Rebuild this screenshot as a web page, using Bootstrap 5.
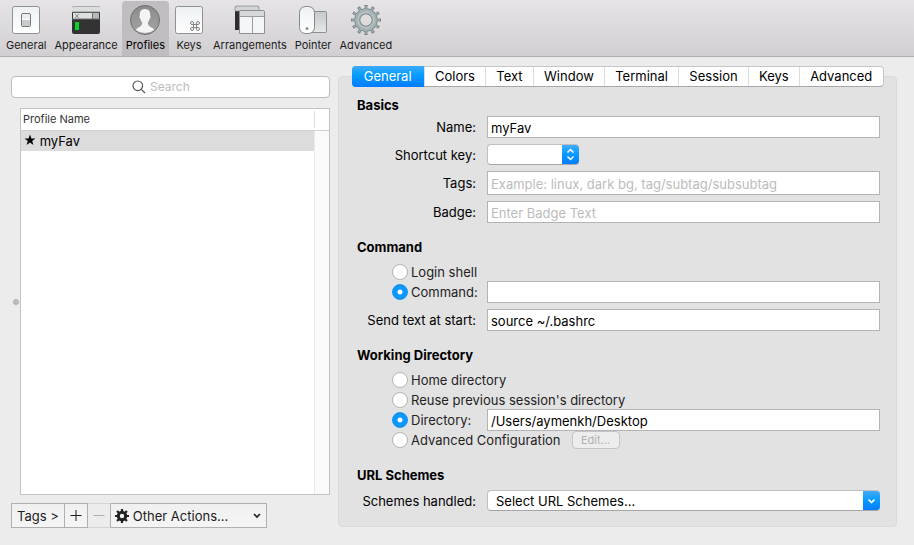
<!DOCTYPE html>
<html lang="en">
<head>
<meta charset="utf-8">
<meta name="viewport" content="width=device-width, initial-scale=1">
<title>Preferences – Profiles</title>
<link href="https://cdn.jsdelivr.net/npm/bootstrap@5.3.0/dist/css/bootstrap.min.css" rel="stylesheet">
<style>
  body { background: #ececec; color: #000; font: 13px/18px Inter, "Liberation Sans", sans-serif; }
  .toolbar { background: linear-gradient(#e6e4e6, #d1cfd1); border-bottom: 1px solid #b1afb1; padding: 1px 2px 0; }
  .tool { border: 0; border-radius: 4px 4px 0 0; background: none; padding: 3px 4px 2px; font-size: 11px; line-height: 18px; min-width: 39px; color: #1c1c1c; }
  .tool svg { width: 32px; height: 32px; }
  .tool.active { background: #bfbdbf; color: #000; }
  .content-area { padding: 9px 17px 17px 11px; gap: 8px; }
  .sidebar { width: 319px; padding-top: 10px; }
  .search-box { height: 22px; background: #fff; border: 1px solid #bcbcbc; border-radius: 4px; }
  .search-box input { width: 59px; font-size: 12px; }
  .search-box input, .search-box input:focus { border: 0; outline: 0; background: none; }
  ::placeholder { color: #bcbcbc !important; opacity: 1; }
  .list-area { margin: 10px 0 8px; }
  .gutter { width: 9px; }
  .grip { width: 6px; height: 6px; border-radius: 50%; background: #bdbdbd; border: 1px solid #b0b0b0; }
  .list-frame { background: linear-gradient(90deg, #fff 293px, #ebebeb 293px, #ebebeb 294px, #fafafa 294px); border: 1px solid #c3c3c3; }
  .list-frame table { font-size: 13px; line-height: 20px; }
  .list-frame th { background: #fff; border-bottom: 1px solid #d0d0d0; font-size: 11px; line-height: 21px; font-weight: 400; color: #333; padding: 0 2px; }
  .list-frame th.spacer { width: 15px; }
  .list-frame th.spacer::before { content: ""; display: block; height: 17px; border-left: 1px solid #dcdcdc; margin-left: -2px; }
  .list-frame td { padding: 0 3px; }
  .list-frame td.chosen { background: #dcdcdc; }
  .bottom-bar > * { height: 25px; border: 1px solid #b0b0b0; background: linear-gradient(#f0f0f0, #f5f5f5); color: #1c1c1c; }
  .bottom-bar > :not(:first-child) { border-left: 0; }
  .bottom-bar .tags-btn { padding: 0 5px; }
  .bottom-bar .square-btn { width: 23px; }
  .bottom-bar .square-btn:disabled { border-color: #d4d4d4 #b0b0b0 #d4d4d4 transparent; background: #ececec; color: #b0b0b0; }
  .actions-box { width: 156px; padding-left: 4px; }
  .actions-box select { appearance: none; border: 0; padding: 0 20px 0 4px; color: inherit;
    background: url("data:image/svg+xml,%3Csvg xmlns='http://www.w3.org/2000/svg' width='8' height='6'%3E%3Cpath d='M1 1l3 3 3-3' fill='none' stroke='%23222' stroke-width='1.7'/%3E%3C/svg%3E") no-repeat right 5px center; }
  .tab-strip { width: 532px; height: 21px; margin-bottom: -11px; background: #fff; border: 1px solid #c6c6c6; border-bottom-color: #a8a8a8; border-radius: 4px; z-index: 1; }
  .tab-strip .nav-item + .nav-item { border-left: 1px solid #dcdcdc; }
  .tab-strip .nav-link { color: #000; background: none; border: 0; padding: 0 10px; border-radius: 0; line-height: 19px; }
  .tab-strip .nav-link.active { color: #fff; background: linear-gradient(#3cabfb, #069cff 45%, #007bff); border-radius: 4px 0 0 4px; margin: -1px 0 -1px -1px; line-height: 21px; width: calc(100% + 1px); padding: 0 12px; }
  .settings { background: #e2e2e2; border: 1px solid #dadada; border-radius: 4px; padding: 19px 16px 15px 18px; }
  .settings h2 { font-size: 13px; line-height: 18px; font-weight: 700; margin: 0; }
  .settings h2.above-choices { margin-bottom: 7px; }
  .settings section { margin-bottom: 15px; }
  .settings section.directories { margin-bottom: 17px; }
  .field-row { display: grid; grid-template-columns: 119px minmax(0, 1fr); column-gap: 11px; align-items: center; margin-top: 6px; }
  .field-row > label { text-align: right; }
  .field-row.tight { margin-top: 0; }
  h2 + .field-row.tight { margin-top: 2px; }
  .text-field { height: 22px; border: 1px solid #b4b4b4; background: #fff; padding: 1px 3px 0; width: 100%; }
  .text-field.tall { height: 24px; }
  .choice { display: flex; align-items: center; gap: 3px; height: 18px; white-space: nowrap; margin-left: 35px; color: #222; }
  .choice + .choice { margin-top: 2px; }
  .choice input { appearance: none; width: 16px; height: 16px; flex: none; border-radius: 50%; border: 1px solid #b4b4b4; background: #fff; margin: 0; }
  .choice input:checked { border-color: #0a94f5; background: radial-gradient(circle, #fff 2px, #0b97fb 3px); }
  .blue-select { appearance: none; height: 21px; border: 1px solid #c0c0c0; border-bottom-color: #a6a6a6; border-right: 0; border-radius: 4px; padding: 0 24px 0 8px; background: #fff; background-origin: border-box; background-clip: border-box; background-repeat: no-repeat; background-position: right center; }
  .blue-select.short { width: 92px; background-image: url("data:image/svg+xml,%3Csvg xmlns='http://www.w3.org/2000/svg' width='17' height='21'%3E%3Cdefs%3E%3ClinearGradient id='g' x2='0' y2='1'%3E%3Cstop stop-color='%2344aefc'/%3E%3Cstop offset='.5' stop-color='%23069aff'/%3E%3Cstop offset='1' stop-color='%230079ff'/%3E%3C/linearGradient%3E%3C/defs%3E%3Cpath fill='url(%23g)' d='M0 0h17v21H0z'/%3E%3Cpath d='M5.500 8.500l3-3 3 3M5.500 12.500l3 3 3-3' fill='none' stroke='%23fff' stroke-width='1.500'/%3E%3C/svg%3E"); }
  .blue-select.long { width: 100%; background-image: url("data:image/svg+xml,%3Csvg xmlns='http://www.w3.org/2000/svg' width='17' height='21'%3E%3Cdefs%3E%3ClinearGradient id='g' x2='0' y2='1'%3E%3Cstop stop-color='%2344aefc'/%3E%3Cstop offset='.5' stop-color='%23069aff'/%3E%3Cstop offset='1' stop-color='%230079ff'/%3E%3C/linearGradient%3E%3C/defs%3E%3Cpath fill='url(%23g)' d='M0 0h17v21H0z'/%3E%3Cpath d='M5.500 9.500l3 3 3-3' fill='none' stroke='%23fff' stroke-width='1.700'/%3E%3C/svg%3E"); }
  .edit-btn { width: 48px; height: 18px; border: 1px solid #c4c4c4; border-radius: 4px; background: #ededed; color: #b2b2b2; font-size: 11px; line-height: 16px; padding: 0; margin-left: 11px; }
</style>
</head>
<body class="d-flex flex-column min-vh-100">
<header class="toolbar d-flex">
  <button class="tool d-flex flex-column align-items-center">
    <svg viewBox="0 0 32 32"><defs><linearGradient id="paper" x2="0" y2="1"><stop stop-color="#eef1f3"/><stop offset="1" stop-color="#fff"/></linearGradient></defs>
      <rect x="2.500" y="2.500" width="27" height="27" rx="2" fill="url(#paper)" stroke="#8f9193"/><rect x="11.500" y="9.500" width="9" height="13" rx="1.500" fill="#eceeef" stroke="#77797b"/><path d="M12 16h8v5q0 1-1 1h-6q-1 0-1-1z" fill="#c9cccd"/><path d="M12 15.500h8" stroke="#fff"/></svg>
    General</button>
  <button class="tool d-flex flex-column align-items-center">
    <svg viewBox="0 0 32 32"><rect x="2" y="2" width="28" height="28" rx="2" fill="#333"/><path d="M2 8V4q0-2 2-2h24q2 0 2 2v4z" fill="#dcdddd"/><path d="M4 2.500h24" stroke="#aaa"/><path d="M2 8h28" stroke="#8a8a8a"/><path d="M3 9h19v6H3z" fill="#dedfe0"/><path d="M23 9h6v6h-6z" fill="#b5b7b8"/><path d="M22.500 8v7M2 15h28" stroke="#6c6e70"/><path d="M5 10l4 4M9 10l-4 4" stroke="#77797b" stroke-width=".8"/><path d="M5 18h4v8H5z" fill="#00d52c"/></svg>
    Appearance</button>
  <button class="tool active d-flex flex-column align-items-center" aria-current="page">
    <svg viewBox="0 0 32 32"><defs><linearGradient id="disc" x2="0" y2="1"><stop stop-color="#8b8b8b"/><stop offset="1" stop-color="#a5a5a5"/></linearGradient></defs>
      <circle cx="16" cy="16" r="14.500" fill="url(#disc)" stroke="#6f6f6f"/><path d="M16 5c-4 0-5.500 2.800-5.200 6.500-.8.500-.2 3 .7 3.500.4 1.800 1 2.500 1.700 3.300 0 2.700-.8 3.700-3.700 5.200-1.400.7-2.200 1.500-2.500 2.700Q11 29 16 29t9-2.800c-.3-1.200-1.100-2-2.500-2.700-2.900-1.500-3.700-2.500-3.700-5.200.7-.8 1.300-1.500 1.700-3.300.9-.5 1.500-3 .7-3.500C21.500 7.800 20 5 16 5z" fill="#f4f4f4"/></svg>
    Profiles</button>
  <button class="tool d-flex flex-column align-items-center">
    <svg viewBox="0 0 32 32"><rect x="2.500" y="2.500" width="27" height="27" rx="2" fill="url(#paper)" stroke="#8f9193"/><path d="M20.500 20.500h3v3h-3zM20.500 20.500h-1.500a1.500 1.500 0 1 1 1.500-1.500zM23.500 20.500v-1.500a1.500 1.500 0 1 1 1.500 1.500zM23.500 23.500h1.500a1.500 1.500 0 1 1-1.500 1.500zM20.500 23.500v1.500a1.500 1.500 0 1 1-1.500-1.500z" fill="none" stroke="#808284"/></svg>
    Keys</button>
  <button class="tool d-flex flex-column align-items-center">
    <svg viewBox="0 0 32 32"><path d="M1 26V4q0-2 2-2h20q2 0 2 2v22z" fill="#2e2e2e"/><path d="M1 7V4q0-2 2-2h20q2 0 2 2v3z" fill="#d2d4d5" stroke="#858789" stroke-width=".7"/><path d="M5.500 29.500V8q0-1.500 1.500-1.500h22q1.500 0 1.500 1.500v21.500z" fill="#f3f5f6" stroke="#8d8f91"/><path d="M6 12V8q0-1 1-1h22q1 0 1 1v4z" fill="#d6d8d9"/><path d="M6 12.500h24M18.500 13v16" stroke="#999b9d"/></svg>
    Arrangements</button>
  <button class="tool d-flex flex-column align-items-center">
    <svg viewBox="0 0 32 32"><defs><linearGradient id="pad" x2="0" y2="1"><stop stop-color="#c4c8ca"/><stop offset="1" stop-color="#e5e9ea"/></linearGradient></defs><rect x="12.500" y="7.500" width="17" height="21" rx="1" fill="url(#pad)" stroke="#8c8f91"/><rect x="2.500" y="2.500" width="15" height="27" rx="6" fill="url(#paper)" stroke="#858789"/><circle cx="10" cy="24.500" r="1.500" fill="#929495"/></svg>
    Pointer</button>
  <button class="tool d-flex flex-column align-items-center">
    <svg viewBox="0 0 32 32" fill="none"><circle cx="16" cy="16" r="12.800" stroke="#748084" stroke-width="4.400" pathLength="48" stroke-dasharray="1.700 2.300" stroke-dashoffset=".850"/><circle cx="16" cy="16" r="8.700" stroke="#748084" stroke-width="6"/><circle cx="16" cy="16" r="12.300" stroke="#a5b2b4" stroke-width="3.600" pathLength="48" stroke-dasharray=".8 3.200" stroke-dashoffset=".4"/><circle cx="16" cy="16" r="8.700" stroke="#a5b2b4" stroke-width="4.400"/><circle cx="16" cy="16" r="8" stroke="#c3cccd"/></svg>
    Advanced</button>
</header>

<main class="content-area d-flex flex-grow-1">
  <aside class="sidebar d-flex flex-column flex-shrink-0">
    <label class="search-box d-flex align-items-center justify-content-center gap-1">
      <svg width="14" height="14" viewBox="0 0 14 14" fill="none" stroke="#555" stroke-width="1.200"><circle cx="5.800" cy="5.800" r="4.800"/><path d="M9.300 9.300L13 13"/></svg>
      <input class="p-0" type="text" placeholder="Search" aria-label="Search profiles">
    </label>
    <div class="list-area d-flex flex-grow-1">
      <div class="gutter d-flex align-items-center justify-content-center flex-shrink-0"><span class="grip"></span></div>
      <div class="list-frame flex-grow-1">
        <table class="w-100">
          <thead><tr><th scope="col">Profile Name</th><th class="spacer"></th></tr></thead>
          <tbody><tr><td class="chosen">
            <svg width="12" height="12" viewBox="0 0 12 12" class="align-baseline mb-n1"><path d="M6 .5l1.400 4h4.100L8.200 7l1.200 4L6 8.600 2.600 11l1.200-4L.5 4.500h4.100z"/></svg>
            myFav</td><td></td></tr></tbody>
        </table>
      </div>
    </div>
    <div class="bottom-bar d-flex">
      <button class="tags-btn">Tags &gt;</button>
      <button class="square-btn p-0 d-flex align-items-center justify-content-center" aria-label="Add profile"><svg width="12" height="12" stroke="currentColor"><path d="M.5 5.500h11M6 0v11"/></svg></button>
      <button class="square-btn p-0 d-flex align-items-center justify-content-center" aria-label="Remove profile" disabled><svg width="12" height="12" stroke="currentColor"><path d="M.5 5.500h11"/></svg></button>
      <div class="actions-box d-flex align-items-center">
        <svg class="flex-shrink-0" width="14" height="14" viewBox="0 0 14 14" fill="none" stroke="#222"><circle cx="7" cy="7" r="3.700" stroke-width="3"/><path d="M7 0v3M7 11v3M0 7h3M11 7h3M2.050 2.050l2 2M9.950 9.950l2 2M2.050 11.950l2-2M9.950 4.050l2-2" stroke-width="2.200"/></svg>
        <select class="flex-grow-1" aria-label="Other actions"><option>Other Actions...</option></select>
      </div>
    </div>
  </aside>

  <div class="flex-grow-1 d-flex flex-column">
    <ul class="tab-strip nav nav-fill flex-nowrap align-self-center position-relative">
      <li class="nav-item"><button class="nav-link active">General</button></li>
      <li class="nav-item"><button class="nav-link">Colors</button></li>
      <li class="nav-item"><button class="nav-link">Text</button></li>
      <li class="nav-item"><button class="nav-link">Window</button></li>
      <li class="nav-item"><button class="nav-link">Terminal</button></li>
      <li class="nav-item"><button class="nav-link">Session</button></li>
      <li class="nav-item"><button class="nav-link">Keys</button></li>
      <li class="nav-item"><button class="nav-link">Advanced</button></li>
    </ul>
    <form class="settings">
      <section>
        <h2>Basics</h2>
        <div class="field-row tight"><label for="name">Name:</label><input id="name" class="text-field" value="myFav"></div>
        <div class="field-row"><label for="shortcut">Shortcut key:</label><select id="shortcut" class="blue-select short"><option></option></select></div>
        <div class="field-row"><label for="tags">Tags:</label><input id="tags" class="text-field tall" placeholder="Example: linux, dark bg, tag/subtag/subsubtag"></div>
        <div class="field-row"><label for="badge">Badge:</label><input id="badge" class="text-field" placeholder="Enter Badge Text"></div>
      </section>
      <section>
        <h2 class="above-choices">Command</h2>
        <label class="choice"><input type="radio" name="cmd">Login shell</label>
        <div class="field-row tight"><label class="choice"><input type="radio" name="cmd" checked>Command:</label><input class="text-field" aria-label="Command"></div>
        <div class="field-row"><label for="send">Send text at start:</label><input id="send" class="text-field" value="source ~/.bashrc"></div>
      </section>
      <section class="directories">
        <h2 class="above-choices">Working Directory</h2>
        <label class="choice"><input type="radio" name="dir">Home directory</label>
        <label class="choice"><input type="radio" name="dir">Reuse previous session's directory</label>
        <div class="field-row tight"><label class="choice"><input type="radio" name="dir" checked>Directory:</label><input class="text-field" value="/Users/aymenkh/Desktop" aria-label="Directory path"></div>
        <div class="d-flex align-items-center"><label class="choice"><input type="radio" name="dir">Advanced Configuration</label><button type="button" class="edit-btn" disabled>Edit...</button></div>
      </section>
      <section class="mb-0">
        <h2>URL Schemes</h2>
        <div class="field-row"><label for="schemes">Schemes handled:</label><select id="schemes" class="blue-select long"><option>Select URL Schemes...</option></select></div>
      </section>
    </form>
  </div>
</main>
<script src="https://cdn.jsdelivr.net/npm/bootstrap@5.3.0/dist/js/bootstrap.bundle.min.js"></script>
</body>
</html>
